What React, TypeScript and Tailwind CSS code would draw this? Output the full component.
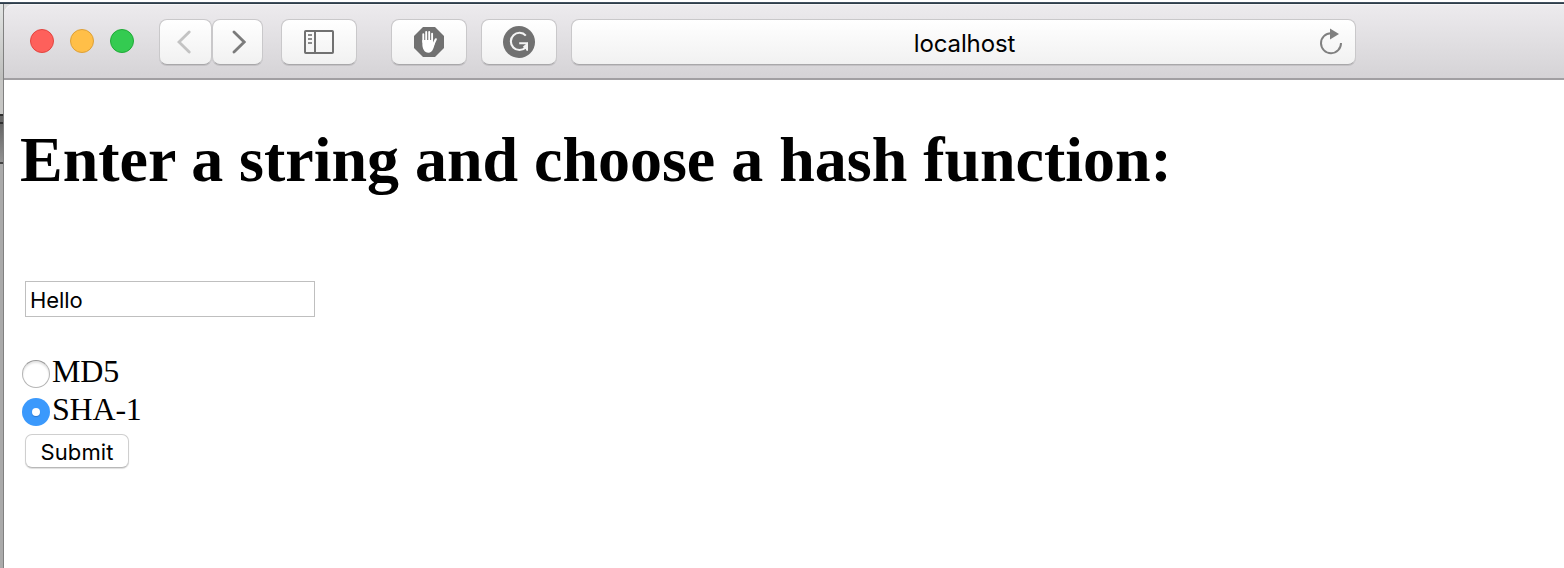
import React, { useState } from "react";

const control =
  "flex h-[46px] shrink-0 items-center justify-center rounded-[8px] border border-[#c9c8ca] border-b-[#a9a8aa] bg-linear-to-b from-white to-[#f1f1f1] shadow-[0_1px_0_#c4c2c5]";

function TrafficLights() {
  return (
    <div className="-mt-[2px] flex gap-4">
      <span className="size-6 rounded-full border border-[#e2443f] bg-[#fe605b]" />
      <span className="size-6 rounded-full border border-[#dda038] bg-[#ffbf48]" />
      <span className="size-6 rounded-full border border-[#20aa37] bg-[#34cb51]" />
    </div>
  );
}

function Chevron({ d, color }: { d: string; color: string }) {
  return (
    <svg width="16" height="26" viewBox="0 0 16 26" fill="none" stroke={color} strokeWidth="2.8" strokeLinecap="round" strokeLinejoin="miter" className="-mt-[2px]">
      <path d={d} />
    </svg>
  );
}

function SidebarIcon() {
  return (
    <svg width="30" height="24" viewBox="0 0 30 24" fill="none" stroke="#717171">
      <rect x="1" y="1" width="28" height="22" rx="0.8" strokeWidth="2" />
      <path d="M11 1V23" strokeWidth="2" />
      <path d="M4 5H8M4 9H8M4 13H8" stroke="#8c8c8c" strokeWidth="2" />
    </svg>
  );
}

function StopHandIcon() {
  return (
    <svg width="30" height="30" viewBox="0 0 30 30">
      <path d="M9 0H21L30 9V21L21 30H9L0 21V9Z" fill="#717171" />
      <g stroke="#fff" strokeWidth="1.9" strokeLinecap="round" fill="none">
        <path d="M9.3 15V7.3M12.2 14V5M15.2 14V5M18.1 15V6.8" />
        <path d="M18.6 19L21.8 12.3" strokeWidth="2.1" />
      </g>
      <path d="M8.35 13H19.05V16.8L21 15.5C20 20 18.8 25.8 14.5 25.8C10.3 25.8 8.35 21.5 8.35 17Z" fill="#fff" />
    </svg>
  );
}

function GrammarIcon() {
  return (
    <svg width="32" height="32" viewBox="0 0 32 32" fill="none">
      <circle cx="16" cy="16" r="16" fill="#717171" />
      <path d="M22.8 9.6A8.6 8.6 0 1 0 22.6 21.4" stroke="#f4f4f4" strokeWidth="2.1" />
      <path d="M16.2 17.2H24V24.5" stroke="#f4f4f4" strokeWidth="1.9" />
      <path d="M25 16.3V25L19.8 20.8Z" fill="#f4f4f4" />
    </svg>
  );
}

function ReloadIcon() {
  return (
    <svg width="24" height="28" viewBox="0 0 24 28" fill="none" className="-mt-px">
      <path d="M12 5.2A10 10 0 1 0 22 15" stroke="#808080" strokeWidth="2" />
      <path d="M11 0.5L20 6L11 11.5Z" fill="#808080" />
    </svg>
  );
}

function Toolbar() {
  return (
    <header className="flex h-[76px] shrink-0 rounded-tl-[10px] border-b-2 border-[#a19fa2] bg-linear-to-b from-[#edebee] to-[#d5d3d6] pt-[15px] pl-[26px] shadow-[inset_0_1px_0_#f6f5f7]">
      <div className="flex h-[46px] items-center">
        <TrafficLights />
        <div className="ml-[25px] flex">
          <button aria-label="Back" className={`${control} w-[53px]`}>
            <Chevron d="M14.2 4L4 14L14.2 24" color="#c3c3c3" />
            <span className="w-[5px]" />
          </button>
          <button aria-label="Forward" className={`${control} w-[51px]`}>
            <Chevron d="M4 4L14.2 14L4 24" color="#7b7b7b" />
          </button>
        </div>
        <button aria-label="Sidebar" className={`${control} ml-[18px] w-[76px]`}><SidebarIcon /></button>
        <button aria-label="Blocker" className={`${control} ml-[34px] w-[76px]`}><StopHandIcon /></button>
        <button aria-label="Grammar" className={`${control} ml-[14px] w-[76px]`}><GrammarIcon /></button>
        <div className={`${control} ml-[14px] w-[785px] pr-[12px] pl-[38px]`}>
          <span className="flex-1 pt-[4px] text-center font-['Inter','Liberation_Sans',sans-serif] text-[24px] leading-[30px] tracking-[-0.1px] text-black">localhost</span>
          <ReloadIcon />
        </div>
      </div>
    </header>
  );
}

function HashForm() {
  const [text, setText] = useState("Hello");
  const [algorithm, setAlgorithm] = useState("SHA-1");
  return (
    <form onSubmit={(e) => e.preventDefault()} className="flex flex-col items-start font-['Liberation_Serif',serif] text-black">
      <input
        aria-label="String"
        value={text}
        onChange={(e) => setText(e.target.value)}
        className="ml-[5px] h-9 w-[290px] border border-[#bfbfbf] bg-white px-[4px] pt-px font-['Inter','Liberation_Sans',sans-serif] text-[22px] leading-7 tracking-[-0.1px] outline-none"
      />
      <div className="mt-9">
        {["MD5", "SHA-1"].map((name) => (
          <label key={name} className="flex h-[38px] items-center pl-[2px] text-[32px] leading-[38px]">
            <input type="radio" name="hash" className="sr-only" checked={algorithm === name} onChange={() => setAlgorithm(name)} />
            {algorithm === name ? (
              <span className="mt-[4px] flex size-7 items-center justify-center rounded-full bg-[#3b99fc]">
                <span className="size-2 rounded-full bg-white shadow-[0_1px_1px_#2a78d0]" />
              </span>
            ) : (
              <span className="mt-[4px] size-7 rounded-full border border-[#b5b5b5] border-t-[#999] bg-white shadow-[inset_0_2px_2px_#e4e4e4]" />
            )}
            <span className="-mt-[2px] ml-[2px] tracking-[-0.2px]">{name}</span>
          </label>
        ))}
      </div>
      <button type="submit" className="mt-[5px] ml-[5px] h-[34px] w-[104px] rounded-[7px] border border-[#cfcfcf] border-b-[#b8b8b8] bg-white pt-[2px] font-['Inter','Liberation_Sans',sans-serif] text-[22px] leading-7 tracking-[0.1px] shadow-[0_1px_1px_#dedede]">
        Submit
      </button>
    </form>
  );
}

export default function App() {
  return (
    <div className="flex h-[568px] w-[1564px] flex-col overflow-hidden bg-white">
      <div className="mt-[2px] h-[2px] shrink-0 bg-linear-to-b from-[#4b5b6b] to-[#26333e]" />
      <div className="flex min-h-0 flex-1 bg-[#dcdcdc]">
        <div className="flex w-1 shrink-0 flex-col border-r border-[#808080]">
          <div className="h-[76px] bg-linear-to-b from-[#e3e5e4] to-[#bdbdbb]" />
          <div className="h-[34px] bg-[#c6c6c4]" />
          <div className="h-[10px] border-y-2 border-[#303030] bg-[#666]" />
          <div className="h-[38px] bg-linear-to-b from-[#666] to-[#929292]" />
          <div className="h-[2px] bg-[#444]" />
          <div className="flex-1 bg-[#aaa]" />
        </div>
        <div className="flex min-w-0 flex-1 flex-col">
          <Toolbar />
          <main className="flex-1 bg-white pl-4">
            <h1 className="mt-[43px] mb-[84px] font-['Liberation_Serif',serif] text-[64px] leading-[74px] font-bold tracking-[-0.02px] whitespace-nowrap text-black">
              Enter a string and choose a hash function:
            </h1>
            <HashForm />
          </main>
        </div>
      </div>
    </div>
  );
}
